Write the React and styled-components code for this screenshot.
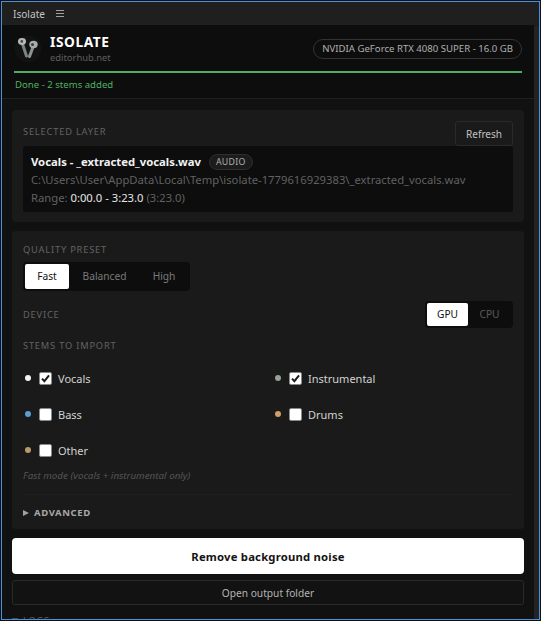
import React from "react"
import styled, { createGlobalStyle } from "styled-components"

const GlobalStyle = createGlobalStyle`
  html, body {
    margin: 0;
    height: 100%;
    background: #111111;
    font-family: "Noto Sans", "Open Sans", sans-serif;
    overflow: hidden;
  }
  * { box-sizing: border-box; }
`

const Frame = styled.div`
  width: 539px;
  height: 619px;
  margin: 1px;
  border: 1px solid #4a90d9;
  display: flex;
  flex-direction: column;
  overflow: hidden;
  background: #111111;
`

const TitleBar = styled.div`
  height: 23px;
  flex: none;
  background: #1f1f1f;
  display: flex;
  align-items: center;
  gap: 11px;
  padding-left: 11px;
  color: #c4c4c4;
  font-size: 10.1px;
`

const MenuIcon = styled.span`
  width: 8px;
  height: 7px;
  border-top: 1px solid #a0a0a0;
  border-bottom: 1px solid #a0a0a0;
  position: relative;
  &::after {
    content: "";
    position: absolute;
    left: 0;
    right: 0;
    top: 2px;
    height: 1px;
    background: #a0a0a0;
  }
`

const Main = styled.div`
  flex: 1;
  display: flex;
  min-height: 0;
`

const Content = styled.div`
  flex: 1;
  min-width: 0;
  overflow: hidden;
`

const Scrollbar = styled.div`
  width: 5px;
  flex: none;
  background: #232323;
  border-radius: 2px 2px 0 0;
`

const Header = styled.header`
  height: 74px;
  background: #0d0d0d;
  border-bottom: 1px solid #1f1f1f;
  padding: 8px 12px 0 12px;
`

const HeaderRow = styled.div`
  display: flex;
  align-items: center;
  justify-content: space-between;
  height: 32px;
`

const Brand = styled.div`
  display: flex;
  align-items: center;
  gap: 8px;
`

const BrandText = styled.div`
  display: flex;
  flex-direction: column;
  gap: 2px;
`

const BrandName = styled.div`
  color: #ffffff;
  font-size: 13.7px;
  font-weight: 700;
  letter-spacing: 0.6px;
  line-height: 16px;
`

const BrandSite = styled.div`
  color: #5e5e5e;
  font-size: 9.4px;
  line-height: 12px;
`

const GpuPill = styled.div`
  height: 20px;
  padding: 0 8px;
  border: 1px solid #333333;
  border-radius: 10px;
  color: #b0b0b0;
  font-size: 9.6px;
  line-height: 18px;
  white-space: nowrap;
`

const Progress = styled.div`
  height: 2px;
  margin-top: 6px;
  background: #4caf63;
`

const Status = styled.div`
  color: #4cb261;
  font-size: 9.6px;
  line-height: 13px;
  margin: 5px 0 0 1px;
`

const Stack = styled.div`
  padding: 11px 10px 0 10px;
  display: flex;
  flex-direction: column;
`

const Panel = styled.section`
  background: #1a1a1a;
  border-radius: 4px;
  padding: ${(p) => p.$pad};
  margin-bottom: ${(p) => p.$mb}px;
  height: ${(p) => p.$h}px;
`

const Label = styled.div`
  color: #636363;
  font-size: 9.3px;
  line-height: 13px;
  letter-spacing: 0.8px;
  text-transform: uppercase;
  margin-top: ${(p) => p.$mt || 0}px;
  margin-bottom: ${(p) => p.$mb || 0}px;
`

const SpacedRow = styled.div`
  display: flex;
  justify-content: space-between;
  align-items: center;
  height: ${(p) => p.$h}px;
  margin-top: ${(p) => p.$mt || 0}px;
`

const SmallButton = styled.button`
  width: 58px;
  height: 25px;
  padding: 0;
  font: inherit;
  font-size: 10px;
  color: #c0c0c0;
  background: #1a1a1a;
  border: 1px solid #2a2a2a;
  border-radius: 3px;
`

const LayerBox = styled.div`
  height: 66px;
  background: #0d0d0d;
  border-radius: 3px;
  padding: 7px 8px;
  font-size: 11.25px;
  line-height: 17.5px;
  color: #616161;
  white-space: nowrap;
  overflow: hidden;
`

const LayerTitle = styled.div`
  display: flex;
  align-items: center;
  gap: 8px;
  height: 18px;
  color: #f2f2f2;
  font-size: 11.3px;
  font-weight: 700;
`

const TypeBadge = styled.span`
  height: 16px;
  padding: 0 6px;
  border: 1px solid #2e2e2e;
  background: #1c1c1c;
  border-radius: 8px;
  color: #b0b0b0;
  font-size: 8.8px;
  font-weight: 400;
  line-height: 14px;
  letter-spacing: 0.3px;
`

const Strong = styled.span`
  color: #e6e6e6;
`

const Segments = styled.div`
  display: inline-flex;
  height: ${(p) => p.$h}px;
  padding: 2px;
  background: #0d0d0d;
  border-radius: 4px;
  margin-top: ${(p) => p.$mt || 0}px;
`

const Segment = styled.div`
  width: ${(p) => p.$w}px;
  height: 100%;
  border-radius: 2px;
  text-align: center;
  font-size: 10.2px;
  line-height: ${(p) => p.$h}px;
  color: ${(p) => (p.$active ? "#111111" : p.$dim ? "#5c5c5c" : "#7a7a7a")};
  background: ${(p) => (p.$active ? "#ffffff" : "transparent")};
`

const StemsGrid = styled.div`
  display: grid;
  grid-template-columns: 250px 1fr;
  grid-auto-rows: 36px;
  margin-top: 8px;
`

const Stem = styled.label`
  display: flex;
  align-items: center;
  height: 36px;
  color: #d2d2d2;
  font-size: 11px;
`

const Dot = styled.span`
  width: 6px;
  height: 6px;
  border-radius: 50%;
  background: ${(p) => p.$color};
  margin: 0 8px 1px 2px;
`

const Box = styled.span`
  width: 13px;
  height: 13px;
  border-radius: 2px;
  background: #ffffff;
  border: 1px solid #8a8a8a;
  margin-right: 6px;
  display: flex;
  align-items: center;
  justify-content: center;
`

const Hint = styled.div`
  color: #555555;
  font-size: 9.8px;
  font-style: italic;
  line-height: 13px;
  margin-top: 1px;
`

const Advanced = styled.div`
  margin-top: 12px;
  border-top: 1px solid #202020;
  padding-top: 11px;
  display: flex;
  align-items: center;
  gap: 5px;
  color: #a8a8a8;
  font-size: 9.5px;
  font-weight: 700;
  letter-spacing: 0.6px;
  line-height: 13px;
`

const Caret = styled.span`
  width: 0;
  height: 0;
  border-left: 6px solid #a0a0a0;
  border-top: 3.5px solid transparent;
  border-bottom: 3.5px solid transparent;
`

const PrimaryButton = styled.button`
  height: 36px;
  font: inherit;
  font-size: 11.3px;
  font-weight: 700;
  letter-spacing: 0.2px;
  color: #141414;
  background: #ffffff;
  border: 0;
  border-radius: 4px;
  margin-bottom: 6px;
`

const OutlineButton = styled.button`
  height: 25px;
  flex: none;
  font: inherit;
  font-size: 10.2px;
  color: #b4b4b4;
  background: #121212;
  border: 1px solid #2a2a2a;
  border-radius: 3px;
  margin-bottom: 9px;
`

const LogLabel = styled.div`
  display: flex;
  align-items: center;
  gap: 5px;
  color: #5f5f5f;
  font-size: 9.3px;
  line-height: 13px;
  letter-spacing: 0.8px;
`

const LogMarker = styled.span`
  width: 6px;
  height: 6px;
  background: #4a4a4a;
`

function EarbudsLogo() {
  return (
    <svg width="28" height="28" viewBox="0 0 28 28">
      <defs>
        <filter id="soft" x="-20%" y="-20%" width="140%" height="140%">
          <feGaussianBlur stdDeviation="0.7" />
        </filter>
      </defs>
      <circle cx="14" cy="14" r="13.5" fill="#121212" />
      <g filter="url(#soft)">
        <path d="M8.5 9 L12.5 21" stroke="#7d8480" strokeWidth="3" strokeLinecap="round" />
        <ellipse cx="8" cy="6.5" rx="4" ry="3.4" fill="#b4bbb7" />
        <circle cx="7.8" cy="6.4" r="1.3" fill="#3f4341" />
        <path d="M19 12 L15.5 21.5" stroke="#8d9490" strokeWidth="3" strokeLinecap="round" />
        <ellipse cx="19.5" cy="9.5" rx="4.2" ry="3.7" fill="#a6adaa" />
        <circle cx="18.5" cy="9.7" r="1.4" fill="#303432" />
      </g>
    </svg>
  )
}

function Check() {
  return (
    <svg width="11" height="11" viewBox="0 0 11 11">
      <path d="M2 5.6 L4.4 8.2 L9 2.4" fill="none" stroke="#1c1c1c" strokeWidth="2" />
    </svg>
  )
}

const stems = [
  { name: "Vocals", color: "#f4f4f4", checked: true },
  { name: "Instrumental", color: "#94a394", checked: true },
  { name: "Bass", color: "#5a9fd4", checked: false },
  { name: "Drums", color: "#cf9f63", checked: false },
  { name: "Other", color: "#b89a68", checked: false },
]

export default function App() {
  return (
    <>
      <GlobalStyle />
      <Frame>
        <TitleBar>
          Isolate
          <MenuIcon />
        </TitleBar>
        <Main>
          <Content>
            <Header>
              <HeaderRow>
                <Brand>
                  <EarbudsLogo />
                  <BrandText>
                    <BrandName>ISOLATE</BrandName>
                    <BrandSite>editorhub.net</BrandSite>
                  </BrandText>
                </Brand>
                <GpuPill>NVIDIA GeForce RTX 4080 SUPER - 16.0 GB</GpuPill>
              </HeaderRow>
              <Progress />
              <Status>Done - 2 stems added</Status>
            </Header>
            <Stack>
              <Panel $h={112} $mb={9} $pad="11px 11px 0 11px">
                <SpacedRow $h={25}>
                  <Label $mb={4}>Selected layer</Label>
                  <SmallButton>Refresh</SmallButton>
                </SpacedRow>
                <LayerBox>
                  <LayerTitle>
                    Vocals - _extracted_vocals.wav
                    <TypeBadge>AUDIO</TypeBadge>
                  </LayerTitle>
                  <div>C:\Users\User\AppData\Local\Temp\isolate-1779616929383\_extracted_vocals.wav</div>
                  <div>
                    Range: <Strong>0:00.0 - 3:23.0</Strong> (3:23.0)
                  </div>
                </LayerBox>
              </Panel>
              <Panel $h={298} $mb={9} $pad="12px 11px 0 11px">
                <Label>Quality preset</Label>
                <Segments $h={29} $mt={6}>
                  <Segment $w={44} $h={25} $active>Fast</Segment>
                  <Segment $w={71} $h={25}>Balanced</Segment>
                  <Segment $w={48} $h={25}>High</Segment>
                </Segments>
                <SpacedRow $h={27} $mt={10}>
                  <Label>Device</Label>
                  <Segments $h={27}>
                    <Segment $w={41} $h={23} $active>GPU</Segment>
                    <Segment $w={43} $h={23} $dim>CPU</Segment>
                  </Segments>
                </SpacedRow>
                <Label $mt={11}>Stems to import</Label>
                <StemsGrid>
                  {stems.map((stem) => (
                    <Stem key={stem.name}>
                      <Dot $color={stem.color} />
                      <Box>{stem.checked && <Check />}</Box>
                      {stem.name}
                    </Stem>
                  ))}
                </StemsGrid>
                <Hint>Fast mode (vocals + instrumental only)</Hint>
                <Advanced>
                  <Caret />
                  ADVANCED
                </Advanced>
              </Panel>
              <PrimaryButton>Remove background noise</PrimaryButton>
              <OutlineButton>Open output folder</OutlineButton>
              <LogLabel>
                <LogMarker />
                LOGS
              </LogLabel>
            </Stack>
          </Content>
          <Scrollbar />
        </Main>
      </Frame>
    </>
  )
}
